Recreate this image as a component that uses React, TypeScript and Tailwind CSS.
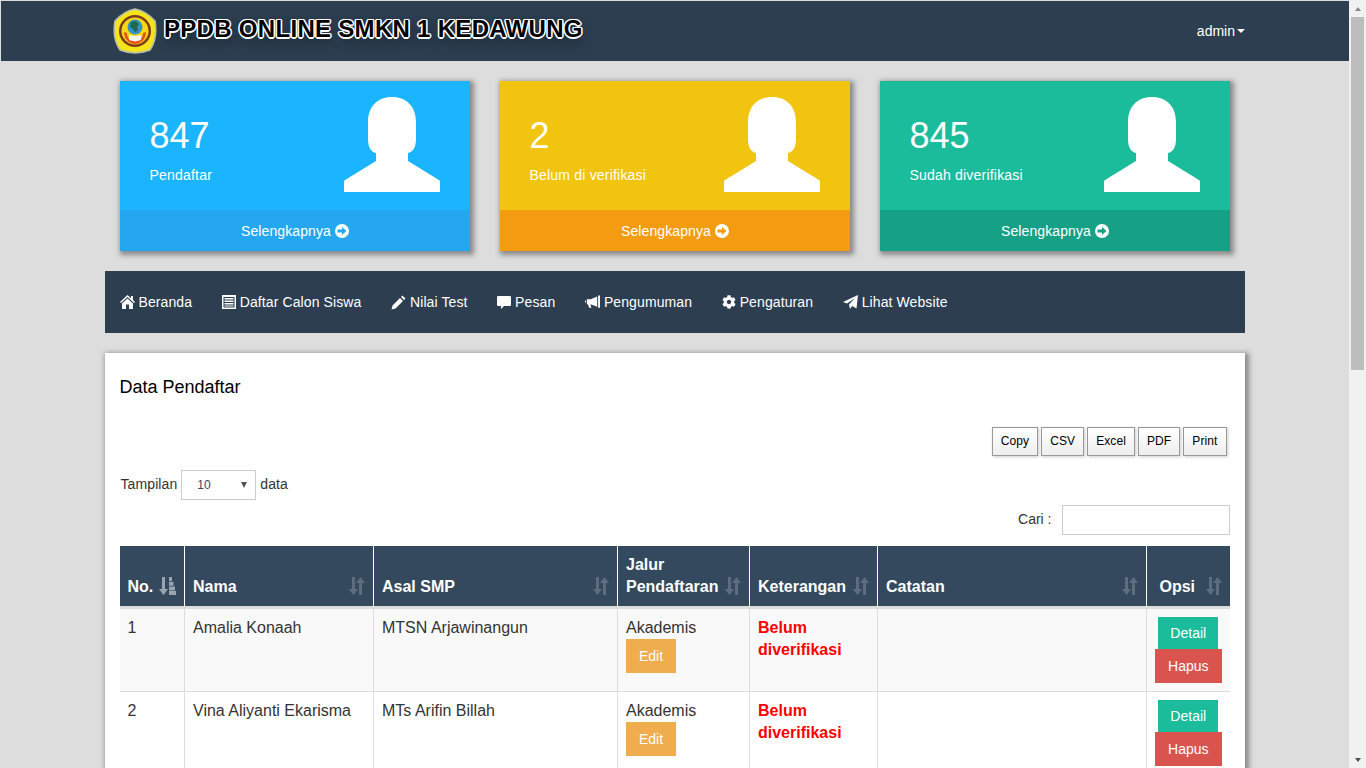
import { FaCog } from 'react-icons/fa'

const stats = [
  { value: '847', label: 'Pendaftar', top: 'bg-[#1ab4ff]', foot: 'bg-[#25a7f0]' },
  { value: '2', label: 'Belum di verifikasi', top: 'bg-[#f1c40f]', foot: 'bg-[#f39c12]' },
  { value: '845', label: 'Sudah diverifikasi', top: 'bg-[#1abc9c]', foot: 'bg-[#16a085]' },
]

const rows = [
  { no: 1, nama: 'Amalia Konaah', asal: 'MTSN Arjawinangun', striped: true },
  { no: 2, nama: 'Vina Aliyanti Ekarisma', asal: 'MTs Arifin Billah', striped: false },
]

function Person() {
  return (
    <svg viewBox="0 0 96 95" className="w-24 h-[95px] fill-white">
      <path d="M48 0C33 0 24 10 24 25v17c0 8 3 13 8 14v8L1 83c-1 .7-1 1-1 3v9h96v-9c0-2 0-2.300-1-3L64 64v-8c5-1 8-6 8-14V25C72 10 63 0 48 0z" />
    </svg>
  )
}

function ArrowCircle() {
  return (
    <svg viewBox="0 0 14 14" className="w-[14px] h-[14px] fill-white">
      <path
        fillRule="evenodd"
        d="M7 0a7 7 0 1 1 0 14A7 7 0 0 1 7 0zM2.500 5.500v3H7V11l4.500-4L7 3v2.500z"
      />
    </svg>
  )
}

function Home() {
  return (
    <svg viewBox="0 0 15 14" className="w-[15px] h-[14px] fill-white">
      <path d="M7.500 0 11 3.200V1h2v4l2 2-1 1-6.500-6L1 8 0 7zM7.500 3.500 13 8.500V14H9V9.500H6V14H2V8.500z" />
    </svg>
  )
}

function ListAlt() {
  return (
    <svg viewBox="0 0 14 14" className="w-[14px] h-[14px] fill-white">
      <path d="M0 0h14v14H0zm1.500 2v10.500h11V2zM2.500 3h9v1.500h-9zm0 2.500h9V7h-9zm0 2.500h9v1.500h-9zm0 2.500h9V11.500h-9z" fillRule="evenodd" />
    </svg>
  )
}

function Pencil() {
  return (
    <svg viewBox="0 0 15 15" className="w-[15px] h-[15px] fill-white">
      <path d="M11.500 0.500 14.500 3.500 13 5 10 2zM9 3l3 3-7.500 7.500L0.500 14.500 1.500 10.500z" />
    </svg>
  )
}

function Comment() {
  return (
    <svg viewBox="0 0 14 14" className="w-[14px] h-[14px] fill-white">
      <path d="M1 1h12a1 1 0 0 1 1 1v8a1 1 0 0 1-1 1H7l-3 3v-3H1a1 1 0 0 1-1-1V2a1 1 0 0 1 1-1z" />
    </svg>
  )
}

function Bullhorn() {
  return (
    <svg viewBox="0 0 16 14" className="w-[15px] h-[14px] fill-white">
      <path d="M14 0h2v13h-2zM13 1v11L6 9.500V11l1 2H4.500L3 9.500H2V4h4zM0 5.500h1v2H0z" />
    </svg>
  )
}

function Send() {
  return (
    <svg viewBox="0 0 15 14" className="w-[15px] h-[14px] fill-white">
      <path d="M15 0 13.500 13.500 9 11 7 14 6 9.500 12 3 4 8.500 0 7z" />
    </svg>
  )
}

function SortBoth() {
  return (
    <svg viewBox="0 0 17 18" className="w-[17px] h-[18px] fill-white opacity-20">
      <path d="M4 0h3v12h3l-4.500 6L1 12h3zM11 18V6H8l4.500-6L17 6h-3v12z" />
    </svg>
  )
}

function SortAsc() {
  return (
    <svg viewBox="0 0 17 18" className="w-[17px] h-[18px] fill-white opacity-50">
      <path d="M3 0h3v12h3l-4.500 6L0 12h3zM10 0h3v4h-3zM10 4.700h4.500v4H10zM10 9.400h6v4h-6zM10 14h7v4h-7z" />
    </svg>
  )
}

function Logo() {
  return (
    <svg viewBox="0 0 44 46" className="w-11 h-[46px] shrink-0">
      <path
        d="M22 1Q33 3 42 13 45 30 37 42 22 48 7 42-1 30 2 13 11 3 22 1z"
        fill="#f4e41c"
        stroke="#b9bcae"
        strokeWidth="1.500"
      />
      <circle cx="22" cy="23" r="16" fill="#7d3a1c" />
      <circle cx="22" cy="23" r="13.500" fill="#f7d812" />
      <path d="M11 24c0 8 6 12 11 12s11-4 11-12l-3 1c0 5-3 8-8 8s-8-3-8-8z" fill="#e8501c" />
      <circle cx="22" cy="19" r="7.500" fill="#2f93c4" />
      <path d="M18 14l5-1 3 3-2 3 1 3-3 2-2-3-3-2z" fill="#1f6a4a" />
      <path d="M16 27l6 1 6-1v5l-6 1.500-6-1.500z" fill="#f4f4f0" />
    </svg>
  )
}

function Navbar() {
  return (
    <header className="h-[60px] mt-px ml-px bg-[#2c3e50] shrink-0">
      <div className="w-[1140px] mx-auto h-full flex items-center justify-between">
        <div className="flex items-center pl-2 gap-[7px] h-full">
          <Logo />
          <span className="font-bold text-[24px] tracking-[0.3px] pb-1 text-black [text-shadow:-1.5px_0_0_#fff,1.5px_0_0_#fff,0_-1.5px_0_#fff,0_1.5px_0_#fff,-1px_-1px_0_#fff,1px_-1px_0_#fff,-1px_1px_0_#fff,1px_1px_0_#fff,2px_6px_12px_#1c2733]">
            PPDB ONLINE SMKN 1 KEDAWUNG
          </span>
        </div>
        <div className="flex items-center gap-[2px] text-sm text-white">
          admin
          <span className="w-0 h-0 border-x-4 border-x-transparent border-t-4 border-t-white" />
        </div>
      </div>
    </header>
  )
}

function StatCard({ stat }: { stat: (typeof stats)[number] }) {
  return (
    <div className="w-[350px] h-[170px] flex flex-col text-white shadow-[2px_2px_5px_2px_#8a8a8a]">
      <div className={`${stat.top} h-[129px] flex justify-between pl-[30px] pr-[30px] pt-4`}>
        <div className="pt-[21px]">
          <div className="text-[36px] leading-[36px]">{stat.value}</div>
          <div className="text-sm leading-5 mt-[11px] tracking-[0.2px]">{stat.label}</div>
        </div>
        <Person />
      </div>
      <div className={`${stat.foot} flex-1 flex items-center justify-center gap-1 pl-px text-sm tracking-[0.1px]`}>
        Selengkapnya <ArrowCircle />
      </div>
    </div>
  )
}

function MainMenu() {
  const items = [
    { label: 'Beranda', icon: <Home /> },
    { label: 'Daftar Calon Siswa', icon: <ListAlt /> },
    { label: 'Nilai Test', icon: <Pencil /> },
    { label: 'Pesan', icon: <Comment /> },
    { label: 'Pengumuman', icon: <Bullhorn /> },
    { label: 'Pengaturan', icon: <FaCog className="w-[14px] h-[14px]" /> },
    { label: 'Lihat Website', icon: <Send /> },
  ]
  return (
    <nav className="h-[62px] bg-[#2c3e50] flex items-center gap-[29.6px] px-[15px] text-sm tracking-[0.1px] text-white">
      {items.map((item) => (
        <span key={item.label} className="flex items-center gap-1">
          {item.icon}
          {item.label}
        </span>
      ))}
    </nav>
  )
}

function HeadCell({ label, className, active, center }: { label: string; className: string; active?: boolean; center?: boolean }) {
  const align = center ? 'text-center' : 'text-left'
  return (
    <th className={`relative align-bottom py-2 pl-2 pr-[30px] font-bold leading-[22px] border-r border-white last:border-r-0 ${align} ${className}`}>
      {label}
      <span className="absolute right-2 bottom-[11px]">{active ? <SortAsc /> : <SortBoth />}</span>
    </th>
  )
}

function DataTable() {
  const cell = 'p-2 align-top border-r border-[#dddddd]'
  return (
    <table className="w-[1110px] table-fixed border-collapse text-base">
      <thead className="bg-[#34495e] text-white">
        <tr className="h-[60px] border-b-[3px] border-[#dddddd]">
          <HeadCell label="No." className="w-[65px]" active />
          <HeadCell label="Nama" className="w-[189px]" />
          <HeadCell label="Asal SMP" className="w-[244px]" />
          <HeadCell label="Jalur Pendaftaran" className="w-[132px]" />
          <HeadCell label="Keterangan" className="w-[128px]" />
          <HeadCell label="Catatan" className="w-[269px]" />
          <HeadCell label="Opsi" className="w-[83px]" center />
        </tr>
      </thead>
      <tbody className="text-[#333333] leading-[22px]">
        {rows.map((row) => (
          <tr key={row.no} className={`border-b border-[#dddddd] ${row.striped ? 'bg-[#f9f9f9]' : 'bg-white'}`}>
            <td className={cell}>{row.no}</td>
            <td className={cell}>{row.nama}</td>
            <td className={cell}>{row.asal}</td>
            <td className={cell}>
              Akademis
              <span className="block w-[50px] h-[34px] bg-[#f0ad4e] text-white text-sm leading-[34px] text-center">Edit</span>
            </td>
            <td className={`${cell} font-bold text-[#ff0000]`}>Belum diverifikasi</td>
            <td className={cell} />
            <td className="p-2 align-top">
              <div className="flex flex-col items-center text-white text-sm">
                <span className="w-[60px] h-[34px] bg-[#1abc9c] leading-[32px] text-center">Detail</span>
                <span className="w-[67px] h-[34px] -mt-0.5 bg-[#d9534f] leading-[34px] text-center relative">Hapus</span>
              </div>
            </td>
          </tr>
        ))}
      </tbody>
    </table>
  )
}

function DataPanel() {
  return (
    <section className="mt-5 bg-white px-[15px] pt-[23px] pb-6 text-sm text-[#333333] shadow-[2px_2px_5px_2px_#8a8a8a]">
      <h2 className="text-[18px] leading-[22px] text-black">Data Pendaftar</h2>
      <div className="flex justify-end gap-[3px] mt-[29px] pr-[3px]">
        {['Copy', 'CSV', 'Excel', 'PDF', 'Print'].map((b) => (
          <span
            key={b}
            className="h-[29px] px-2 pb-px flex items-center text-xs tracking-[0.1px] text-black border border-[#999999] bg-gradient-to-b from-white to-[#eeeeee] shadow-[1px_1px_3px_#cccccc]"
          >
            {b}
          </span>
        ))}
      </div>
      <div className="flex items-center gap-1 mt-[14px] pl-px tracking-[0.1px]">
        <span className="pb-0.5">Tampilan</span>
        <div className="w-[75px] h-[30px] border border-[#cccccc] flex items-center justify-between pl-[15px] pr-2 text-xs text-[#34495e]">
          10
          <span className="w-0 h-0 border-x-[3.5px] border-x-transparent border-t-[6px] border-t-[#555555]" />
        </div>
        <span className="pb-0.5">data</span>
      </div>
      <div className="flex items-center justify-end gap-[10px] mt-[5px]">
        <span className="pb-0.5">Cari :</span>
        <div className="w-[168px] h-[30px] border border-[#cccccc]" />
      </div>
      <div className="mt-[11px]">
        <DataTable />
      </div>
    </section>
  )
}

function Scrollbar() {
  return (
    <aside className="w-[17px] h-full bg-[#f1f1f1] flex flex-col items-center shrink-0">
      <div className="h-[17px] flex items-center justify-center">
        <span className="w-0 h-0 border-x-[3.5px] border-x-transparent border-b-4 border-b-[#8a8a8a]" />
      </div>
      <div className="w-[13px] h-[353px] bg-[#bdbdbd]" />
      <div className="flex-1" />
      <div className="h-[17px] flex items-center justify-center">
        <span className="w-0 h-0 border-x-[3.5px] border-x-transparent border-t-4 border-t-[#505050]" />
      </div>
    </aside>
  )
}

export default function App() {
  return (
    <div className="h-screen flex overflow-hidden bg-[#dddddd] font-['Liberation_Sans',Arial,sans-serif]">
      <main className="flex-1 flex flex-col overflow-hidden">
        <Navbar />
        <div className="w-[1140px] mx-auto pt-5">
          <div className="flex justify-between px-[15px]">
            {stats.map((s) => (
              <StatCard key={s.label} stat={s} />
            ))}
          </div>
          <div className="mt-5">
            <MainMenu />
          </div>
          <DataPanel />
        </div>
      </main>
      <Scrollbar />
    </div>
  )
}
